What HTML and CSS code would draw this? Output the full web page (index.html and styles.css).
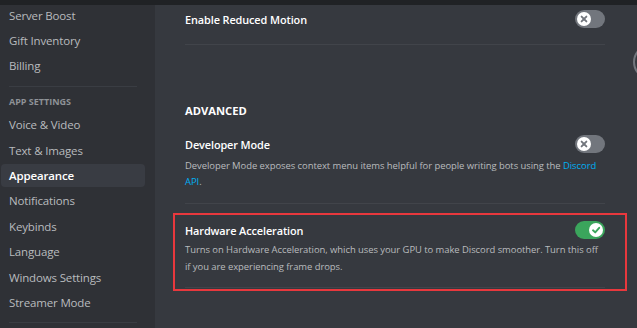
FILE: index.html
```html
<!DOCTYPE html>
<html>
<head>
<meta charset="utf-8">
<link rel="stylesheet" href="styles.css">
</head>
<body>
<div class="topbar"></div>
<div class="main">
  <nav class="sidebar">
    <div class="item">Server Boost</div>
    <div class="item">Gift Inventory</div>
    <div class="item">Billing</div>
    <div class="sep"></div>
    <div class="side-header">App Settings</div>
    <div class="item">Voice &amp; Video</div>
    <div class="item">Text &amp; Images</div>
    <div class="item selected">Appearance</div>
    <div class="item">Notifications</div>
    <div class="item">Keybinds</div>
    <div class="item">Language</div>
    <div class="item">Windows Settings</div>
    <div class="item">Streamer Mode</div>
    <div class="sep sep-bottom"></div>
  </nav>
  <section class="content">
    <div class="row first">
      <div class="title">Enable Reduced Motion</div>
      <div class="toggle off"><span class="knob"><svg viewBox="0 0 14 14" width="14" height="14"><path d="M4.6 4.6 L9.4 9.4 M9.4 4.6 L4.6 9.4" stroke="#72767d" stroke-width="1.9" stroke-linecap="round"/></svg></span></div>
    </div>
    <div class="divider d1"></div>

    <h2 class="section">Advanced</h2>

    <div class="row">
      <div class="title">Developer Mode</div>
      <div class="toggle off"><span class="knob"><svg viewBox="0 0 14 14" width="14" height="14"><path d="M4.6 4.6 L9.4 9.4 M9.4 4.6 L4.6 9.4" stroke="#72767d" stroke-width="1.9" stroke-linecap="round"/></svg></span></div>
    </div>
    <p class="desc">Developer Mode exposes context menu items helpful for people writing bots using the <span class="link">Discord</span> <span class="link">API</span>.</p>
    <div class="divider d2"></div>

    <div class="highlight">
      <div class="row">
        <div class="title">Hardware Acceleration</div>
        <div class="toggle on"><span class="knob"><svg viewBox="0 0 14 14" width="14" height="14"><path d="M4 7.3 L6.2 9.4 L10.2 4.8" fill="none" stroke="#3ba55c" stroke-width="1.9" stroke-linecap="round" stroke-linejoin="round"/></svg></span></div>
      </div>
      <p class="desc">Turns on Hardware Acceleration, which uses your GPU to make Discord smoother. Turn this off if you are experiencing frame drops.</p>
      <div class="divider d3"></div>
    </div>
  </section>
</div>
<div class="esc-clip"><div class="esc"></div></div>
</body>
</html>
```

FILE: styles.css
```css
html, body {
  margin: 0;
  padding: 0;
  width: 637px;
  height: 328px;
  overflow: hidden;
  background: #36393f;
  font-family: "Open Sans", "Noto Sans", sans-serif;
}

.topbar {
  height: 5px;
  background: #202225;
}

.main {
  display: flex;
  height: 323px;
}

.sidebar {
  width: 155px;
  flex: none;
  background: #2f3136;
  overflow: hidden;
  display: flex;
  flex-direction: column;
}

.item {
  flex: none;
  height: 23px;
  margin: 0 10px 2.4px 1px;
  padding-left: 8px;
  border-radius: 4px;
  display: flex;
  align-items: center;
  font-size: 11.5px;
  font-weight: 500;
  color: #b9bbbe;
  letter-spacing: -0.15px;
}

.item:first-child {
  margin-top: -1.5px;
}

.item.selected {
  background: #393c43;
  color: #ffffff;
  font-weight: 600;
}

.sep {
  flex: none;
  height: 1px;
  margin: 6px 18px 0 9px;
  background: #3a3d43;
}

.sep-bottom {
  margin-top: 5.5px;
}

.side-header {
  flex: none;
  height: 16px;
  margin: 7px 0 3.5px 9px;
  display: flex;
  align-items: center;
  font-size: 9px;
  font-weight: 700;
  text-transform: uppercase;
  color: #8e9297;
}

.content {
  flex: 1;
  padding: 5px 32px 0 30px;
  display: flex;
  flex-direction: column;
}

.row {
  display: flex;
  align-items: center;
  justify-content: space-between;
  height: 18px;
}

.title {
  font-size: 10.9px;
  font-weight: 600;
  color: #ffffff;
  letter-spacing: -0.1px;
}

.toggle {
  width: 30px;
  height: 18px;
  border-radius: 9px;
  background: #72767d;
  display: flex;
  align-items: center;
  padding: 0 2px;
  box-sizing: border-box;
}

.toggle.on {
  background: #3ba55c;
  justify-content: flex-end;
}

.knob {
  width: 14px;
  height: 14px;
  border-radius: 50%;
  background: #ffffff;
  display: flex;
}

.divider {
  height: 1px;
  background: #41444a;
  flex: none;
}

.d1 { margin-top: 16px; }
.d2 { margin-top: 13px; }
.d3 { margin-top: 12px; }

.section {
  margin: 58px 0 16px 0;
  height: 16px;
  line-height: 16px;
  font-size: 11.2px;
  font-weight: 700;
  text-transform: uppercase;
  color: #ffffff;
}

.desc {
  margin: 5px 0 0 0;
  font-size: 9.45px;
  line-height: 16px;
  color: #b9bbbe;
  letter-spacing: -0.05px;
}

.link {
  color: #00b0f4;
}

.highlight {
  margin: 9px -22px 0 -12px;
  padding: 6px 20px 1px 10px;
  border: 2px solid #e8383d;
}

.highlight .desc {
  margin-top: 2px;
  line-height: 17px;
}

.esc-clip {
  position: absolute;
  right: 0;
  top: 44px;
  width: 4px;
  height: 36px;
  overflow: hidden;
}

.esc {
  width: 32px;
  height: 32px;
  border: 2px solid #72767d;
  border-radius: 50%;
}
```
